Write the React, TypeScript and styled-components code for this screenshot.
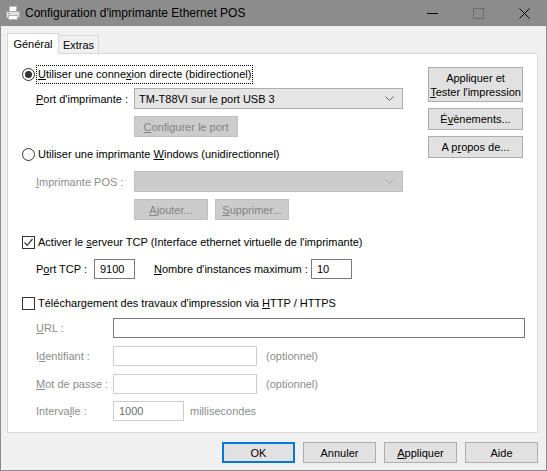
import React from 'react';
import styled, { createGlobalStyle } from 'styled-components';

const GlobalStyle = createGlobalStyle`
  html, body {
    margin: 0;
    padding: 0;
    background: #f0f0f0;
  }
  body {
    font-family: "Liberation Sans", Arial, sans-serif;
    font-size: 11px;
    color: #000;
  }
`;

const Window = styled.div`
  width: 547px;
  height: 471px;
  box-sizing: border-box;
  border: 1px solid #8c8c8c;
  border-top: none;
  background: #f0f0f0;
  display: flex;
  flex-direction: column;
`;

const TitleBar = styled.div`
  height: 26px;
  margin: 0 -1px;
  background: #8c8c8c;
  display: flex;
  align-items: center;
`;

const TitleIcon = styled.div`
  width: 16px;
  height: 16px;
  margin: 0 4px 0 5px;
  display: flex;
`;

const TitleText = styled.div`
  flex: 1;
  font-size: 12px;
  color: #000;
`;

const Control = styled.div`
  width: 46px;
  height: 26px;
  display: flex;
  align-items: center;
  justify-content: center;
`;

const Body = styled.div`
  flex: 1;
  padding: 7px 8px 7px 6px;
  display: flex;
  flex-direction: column;
`;

const Tabs = styled.div`
  height: 20px;
  display: flex;
  align-items: flex-start;
`;

const Tab = styled.div<{ $active?: boolean }>`
  box-sizing: border-box;
  position: relative;
  z-index: ${p => (p.$active ? 2 : 1)};
  width: ${p => (p.$active ? '52px' : '40px')};
  height: ${p => (p.$active ? '21px' : '18px')};
  margin-top: ${p => (p.$active ? '0' : '2px')};
  border: 1px solid #d9d9d9;
  border-bottom: none;
  border-left: ${p => (p.$active ? '1px solid #d9d9d9' : 'none')};
  background: ${p => (p.$active ? '#fff' : '#f0f0f0')};
  display: flex;
  align-items: center;
  justify-content: center;
  padding-top: ${p => (p.$active ? '0' : '1px')};
`;

const Panel = styled.div`
  box-sizing: border-box;
  height: 380px;
  background: #fff;
  border: 1px solid #d9d9d9;
  padding: 0 14px;
  display: flex;
  flex-direction: column;
`;

const TopArea = styled.div`
  display: flex;
`;

const LeftCol = styled.div`
  flex: 1;
  display: flex;
  flex-direction: column;
`;

const RightCol = styled.div`
  width: 95px;
  margin-top: 13px;
  display: flex;
  flex-direction: column;
  gap: 6px;
`;

const Row = styled.div<{ $top: number; $h?: number; $indent?: number }>`
  display: flex;
  align-items: center;
  margin-top: ${p => p.$top}px;
  height: ${p => p.$h ?? 20}px;
  padding-left: ${p => p.$indent ?? 0}px;
`;

const Label = styled.span<{ $w?: number; $disabled?: boolean }>`
  width: ${p => (p.$w ? `${p.$w}px` : 'auto')};
  flex: none;
  white-space: nowrap;
  color: ${p => (p.$disabled ? '#8c8c8c' : '#000')};
`;

const Hint = styled.span<{ $gap: number }>`
  margin-left: ${p => p.$gap}px;
  color: #8c8c8c;
`;

const Mn = styled.span`
  text-decoration: underline;
  text-underline-offset: 1px;
`;

const RadioCircle = styled.span<{ $checked?: boolean }>`
  box-sizing: border-box;
  width: 13px;
  height: 13px;
  flex: none;
  border-radius: 50%;
  border: 1px solid #333;
  background: #fff;
  display: flex;
  align-items: center;
  justify-content: center;
  &::after {
    content: '';
    width: 7px;
    height: 7px;
    border-radius: 50%;
    background: ${p => (p.$checked ? '#333' : 'transparent')};
  }
`;

const CheckBox = styled.span`
  box-sizing: border-box;
  width: 13px;
  height: 13px;
  flex: none;
  border: 1px solid #333;
  background: #fff;
  display: flex;
  align-items: center;
  justify-content: center;
`;

const OptionText = styled.span<{ $focus?: boolean }>`
  margin-left: 2px;
  padding: 1px 1px;
  white-space: nowrap;
  outline: ${p => (p.$focus ? '1px dotted #000' : 'none')};
  line-height: 15px;
`;

const Select = styled.div<{ $disabled?: boolean }>`
  box-sizing: border-box;
  width: 269px;
  height: 21px;
  border: 1px solid ${p => (p.$disabled ? '#bfbfbf' : '#acacac')};
  background: ${p => (p.$disabled ? '#cccccc' : '#e5e5e5')};
  display: flex;
  align-items: center;
  padding: 0 8px 0 4px;
`;

const SelectValue = styled.span`
  flex: 1;
`;

const Input = styled.div<{ $w: number; $disabled?: boolean }>`
  box-sizing: border-box;
  width: ${p => p.$w}px;
  height: 20px;
  flex: none;
  border: 1px solid ${p => (p.$disabled ? '#cccccc' : '#7a7a7a')};
  background: #fff;
  display: flex;
  align-items: center;
  padding: 0 5px;
  color: ${p => (p.$disabled ? '#6d6d6d' : '#000')};
`;

const Button = styled.div<{ $w?: number; $h?: number; $disabled?: boolean; $default?: boolean }>`
  box-sizing: border-box;
  width: ${p => (p.$w ? `${p.$w}px` : '100%')};
  height: ${p => p.$h ?? 21}px;
  flex: none;
  border: ${p =>
    p.$default ? '2px solid #0078d7' : p.$disabled ? '1px solid #bfbfbf' : '1px solid #adadad'};
  background: ${p => (p.$disabled ? '#cccccc' : '#e1e1e1')};
  color: ${p => (p.$disabled ? '#838383' : '#000')};
  display: flex;
  align-items: center;
  justify-content: center;
  text-align: center;
  line-height: 14px;
`;

const ButtonGap = styled.div`
  display: flex;
  gap: 7px;
`;

const Footer = styled.div`
  margin-top: 9px;
  display: flex;
  justify-content: flex-end;
  gap: 8px;
`;

const Chevron = ({ color }: { color: string }) => (
  <svg width="9" height="5" viewBox="0 0 9 5">
    <path d="M0.5 0.5 L4.5 4.5 L8.5 0.5" fill="none" stroke={color} strokeWidth="1" />
  </svg>
);

const PrinterIcon = () => (
  <svg width="16" height="16" viewBox="0 0 16 16">
    <rect x="4.5" y="1.5" width="7" height="5" fill="#fff" stroke="#b8b8b8" />
    <rect x="1.5" y="6.5" width="13" height="6" fill="#e4e4e4" stroke="#a8a8a8" />
    <rect x="3.5" y="10.5" width="9" height="4" fill="#fff" stroke="#b0b0b0" />
    <line x1="3" y1="8.5" x2="5" y2="8.5" stroke="#9a9a9a" />
  </svg>
);

const CheckMark = () => (
  <svg width="11" height="11" viewBox="0 0 11 11">
    <path d="M1.5 5.5 L4.2 8.3 L9.5 2" fill="none" stroke="#333" strokeWidth="1.2" />
  </svg>
);

export default function App() {
  return (
    <>
      <GlobalStyle />
      <Window>
        <TitleBar>
          <TitleIcon>
            <PrinterIcon />
          </TitleIcon>
          <TitleText>Configuration d'imprimante Ethernet POS</TitleText>
          <Control>
            <svg width="11" height="11" viewBox="0 0 11 11">
              <line x1="0" y1="5.5" x2="11" y2="5.5" stroke="#000" />
            </svg>
          </Control>
          <Control>
            <svg width="11" height="11" viewBox="0 0 11 11">
              <rect x="0.5" y="0.5" width="10" height="10" fill="none" stroke="#6c6c6c" />
            </svg>
          </Control>
          <Control>
            <svg width="11" height="11" viewBox="0 0 11 11">
              <path d="M0.5 0.5 L10.5 10.5 M10.5 0.5 L0.5 10.5" stroke="#000" />
            </svg>
          </Control>
        </TitleBar>

        <Body>
          <Tabs>
            <Tab $active>Général</Tab>
            <Tab>Extras</Tab>
          </Tabs>

          <Panel>
            <TopArea>
              <LeftCol>
                <Row $top={12} $h={17}>
                  <RadioCircle $checked />
                  <OptionText $focus>
                    <Mn>U</Mn>tiliser une conne<Mn>x</Mn>ion directe (bidirectionel)
                  </OptionText>
                </Row>
                <Row $top={5} $h={21} $indent={14}>
                  <Label $w={98}>
                    <Mn>P</Mn>ort d'imprimante :
                  </Label>
                  <Select>
                    <SelectValue>TM-T88VI sur le port USB 3</SelectValue>
                    <Chevron color="#606060" />
                  </Select>
                </Row>
                <Row $top={7} $h={21} $indent={112}>
                  <Button $w={104} $disabled>
                    <span>
                      <Mn>C</Mn>onfigurer le port
                    </span>
                  </Button>
                </Row>
                <Row $top={9} $h={17}>
                  <RadioCircle />
                  <OptionText>
                    Utiliser une imprimante <Mn>W</Mn>indows (unidirectionnel)
                  </OptionText>
                </Row>
                <Row $top={8} $h={21} $indent={14}>
                  <Label $w={98} $disabled>
                    <Mn>I</Mn>mprimante POS :
                  </Label>
                  <Select $disabled>
                    <SelectValue />
                    <Chevron color="#a8a8a8" />
                  </Select>
                </Row>
                <Row $top={7} $h={21} $indent={112}>
                  <ButtonGap>
                    <Button $w={74} $disabled>
                      <span>
                        <Mn>A</Mn>jouter...
                      </span>
                    </Button>
                    <Button $w={74} $disabled>
                      <span>
                        <Mn>S</Mn>upprimer...
                      </span>
                    </Button>
                  </ButtonGap>
                </Row>
              </LeftCol>

              <RightCol>
                <Button $h={35}>
                  <span>
                    Appliquer et
                    <br />
                    <Mn>T</Mn>ester l'impression
                  </span>
                </Button>
                <Button $h={22}>
                  <span>
                    É<Mn>v</Mn>ènements...
                  </span>
                </Button>
                <Button $h={22}>
                  <span>
                    A p<Mn>r</Mn>opos de...
                  </span>
                </Button>
              </RightCol>
            </TopArea>

            <Row $top={14} $h={17}>
              <CheckBox>
                <CheckMark />
              </CheckBox>
              <OptionText>
                Activer le <Mn>s</Mn>erveur TCP (Interface ethernet virtuelle de l'imprimante)
              </OptionText>
            </Row>
            <Row $top={8} $indent={14}>
              <Label $w={58}>
                P<Mn>o</Mn>rt TCP :
              </Label>
              <Input $w={41}>9100</Input>
              <Label style={{ marginLeft: 19, width: 157 }}>
                <Mn>N</Mn>ombre d'instances maximum :
              </Label>
              <Input $w={41}>10</Input>
            </Row>

            <Row $top={16} $h={17}>
              <CheckBox />
              <OptionText>
                Téléchargement des travaux d'impression via <Mn>H</Mn>TTP / HTTPS
              </OptionText>
            </Row>
            <Row $top={6} $indent={14}>
              <Label $w={77} $disabled>
                <Mn>U</Mn>RL :
              </Label>
              <Input $w={412} />
            </Row>
            <Row $top={8} $indent={14}>
              <Label $w={77} $disabled>
                I<Mn>d</Mn>entifiant :
              </Label>
              <Input $w={144} $disabled />
              <Hint $gap={9}>(optionnel)</Hint>
            </Row>
            <Row $top={8} $indent={14}>
              <Label $w={77} $disabled>
                <Mn>M</Mn>ot de passe :
              </Label>
              <Input $w={144} $disabled />
              <Hint $gap={9}>(optionnel)</Hint>
            </Row>
            <Row $top={7} $indent={14}>
              <Label $w={77} $disabled>
                Interva<Mn>l</Mn>le :
              </Label>
              <Input $w={71} $disabled>
                1000
              </Input>
              <Hint $gap={6}>millisecondes</Hint>
            </Row>
          </Panel>

          <Footer>
            <Button $w={73} $default>
              OK
            </Button>
            <Button $w={73}>Annuler</Button>
            <Button $w={73}>
              <span>
                <Mn>A</Mn>ppliquer
              </span>
            </Button>
            <Button $w={73}>Aide</Button>
          </Footer>
        </Body>
      </Window>
    </>
  );
}
